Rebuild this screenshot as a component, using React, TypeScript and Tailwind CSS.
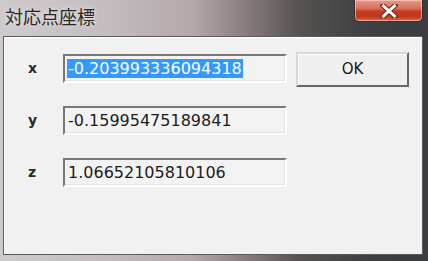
const fields = [
  { label: "x", value: "-0.203993336094318", selected: true },
  { label: "y", value: "-0.15995475189841", selected: false },
  { label: "z", value: "1.06652105810106", selected: false },
];

function CloseButton() {
  return (
    <div className="relative w-[69px] h-[23px] -mt-[1px] rounded-b-[5px] border border-[#3b3030] bg-[linear-gradient(180deg,#e79a88_0%,#d9705c_40%,#c5391f_55%,#c43a20_80%,#d86a4c_100%)] shadow-[inset_0_0_0_1px_rgba(255,220,210,0.55)] flex items-center justify-center">
      <svg width="18" height="14" viewBox="0 0 18 14">
        <path
          d="M3 1.5 L15 12.5 M15 1.5 L3 12.5"
          stroke="#6a2a22"
          strokeWidth="5"
          strokeLinecap="square"
        />
        <path
          d="M3.5 2 L14.5 12 M14.5 2 L3.5 12"
          stroke="#ffffff"
          strokeWidth="3"
          strokeLinecap="square"
        />
      </svg>
    </div>
  );
}

function Field({ label, value, selected }: { label: string; value: string; selected: boolean }) {
  return (
    <div className="flex items-center h-[29px]">
      <div className="w-[59px] pl-[24px] text-[14px] font-bold text-[#2a2a2a]">{label}</div>
      <div className="w-[224px] h-[29px] border-2 border-t-[#777777] border-l-[#777777] border-b-[#ffffff] border-r-[#ffffff] bg-[#f3f3f3] shadow-[inset_-1px_-1px_0_#e2e2e2] flex items-center pl-[2px]">
        <span
          className={
            selected
              ? "bg-[#3399ff] text-white px-[1px] leading-[19px]"
              : "text-[#1c1c1c] px-[1px] leading-[19px]"
          }
        >
          {value}
        </span>
      </div>
    </div>
  );
}

export default function App() {
  return (
    <div
      className="w-[428px] h-[261px] overflow-hidden flex flex-col bg-[linear-gradient(90deg,#cfcacc_0%,#c3bdbf_25%,#b3a8aa_45%,#857b7d_58%,#55534f_70%,#3f4043_85%,#3a3c40_100%)]"
      style={{ fontFamily: '"DejaVu Sans", sans-serif' }}
    >
      {/* Title bar */}
      <div className="h-[36px] flex items-start justify-between shrink-0">
        <div
          className="pl-[5px] pt-[5px] text-[18px] leading-[22px] text-[#2b2628] [text-shadow:0_0_6px_rgba(255,255,255,0.8)]"
          style={{ fontFamily: '"Noto Sans CJK JP", sans-serif' }}
        >
          対応点座標
        </div>
        <div className="mr-[5px]">
          <CloseButton />
        </div>
      </div>

      {/* Client area */}
      <div className="ml-[3px] mr-[5px] h-[219px] shrink-0 border border-[#5b5b5e] bg-[#f1f1f1] shadow-[inset_1px_1px_0_#ffffff]">
        <div className="flex">
          <div className="flex flex-col gap-[23px] pt-[17px]">
            {fields.map((f) => (
              <Field key={f.label} {...f} />
            ))}
          </div>
          <div className="pl-[9px] pt-[15px]">
            <div className="w-[113px] h-[35px] border-2 border-t-[#d8d8d8] border-l-[#d8d8d8] border-b-[#666666] border-r-[#666666] bg-[#f0f0f0] shadow-[inset_1px_1px_0_#ffffff] flex items-center justify-center text-[15px] text-[#1a1a1a]">
              OK
            </div>
          </div>
        </div>
      </div>
    </div>
  );
}
